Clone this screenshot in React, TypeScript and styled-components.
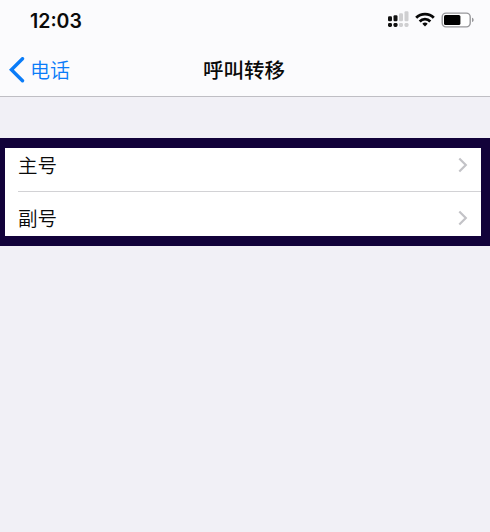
import styled, { createGlobalStyle } from 'styled-components';

const GlobalStyle = createGlobalStyle`
  * {
    box-sizing: border-box;
  }

  body {
    margin: 0;
    background-color: #f1f0f6;
    font-family: Inter, 'Noto Sans CJK SC', sans-serif;
    color: #0a0a0a;
  }
`;

const Screen = styled.div`
  width: 490px;
  height: 532px;
  overflow: hidden;
  background-color: #f1f0f6;
`;

const Header = styled.header`
  height: 97px;
  background-color: #fbfbfd;
  border-bottom: 1px solid #bfbec4;
`;

const StatusBar = styled.div`
  display: flex;
  align-items: center;
  justify-content: space-between;
  height: 40px;
  padding: 0 16px 0 30px;
`;

const Time = styled.span`
  padding-top: 1px;
  font-size: 19.5px;
  font-weight: 600;
  line-height: 40px;
`;

const NavBar = styled.nav`
  display: grid;
  grid-template-columns: 1fr auto 1fr;
  align-items: center;
  height: 56px;
  padding: 3px 11px 0 9px;
`;

const BackButton = styled.button`
  display: flex;
  align-items: center;
  gap: 5px;
  padding: 0;
  border: none;
  background: none;
  color: #0a7cf8;
  font-family: inherit;
  font-size: 20px;
  font-weight: 350;
  line-height: 30px;
`;

const BackLabel = styled.span`
  padding-top: 2px;
`;

const Title = styled.h1`
  margin: 0;
  padding-top: 2px;
  font-size: 20.5px;
  font-weight: 500;
  line-height: 30px;
`;

const Highlight = styled.main`
  height: 108px;
  margin-top: 41px;
  padding: 10px 9px 10px 5px;
  background-color: #12023a;
`;

const List = styled.ul`
  height: 88px;
  margin: 0;
  padding: 0 0 0 13px;
  background-color: #fff;
  list-style: none;
`;

const Row = styled.li<{ $top: number; $divider?: boolean }>`
  display: flex;
  align-items: flex-start;
  justify-content: space-between;
  height: 44px;
  padding: ${props => props.$top}px 13px 0 0;
  border-bottom: ${props => props.$divider ? '1px solid #d2d2d5' : 'none'};
  font-size: 19.5px;
  font-weight: 350;
  line-height: 28px;

  svg {
    margin-top: 5px;
  }
`;

const rows = [
  { label: '主号', top: 4, divider: true },
  { label: '副号', top: 13, divider: false },
];

const signal = [
  { x: 0, top: 5, color: '#111' },
  { x: 5.5, top: 4, color: '#111' },
  { x: 11, top: 2, color: '#cfcfd1' },
  { x: 16.5, top: 0, color: '#cfcfd1' },
];

const StatusIcons = () => (
  <svg width="86" height="18" viewBox="0 0 86 18">
    {signal.map(bar => (
      <g key={bar.x} fill={bar.color}>
        <rect x={bar.x} y={bar.top + 0.3} width="4" height={10 - bar.top} rx="1.2" />
        <rect x={bar.x} y="11.9" width="4" height="4" rx="1.4" />
      </g>
    ))}
    <g fill="none" stroke="#080808" strokeWidth="2.8">
      <path d="M28.2 6.8a12.2 12.2 0 0 1 17.6 0" />
      <path d="M31.7 10.4a7.4 7.4 0 0 1 10.6 0" />
    </g>
    <path d="M34.3 12.7a4 4 0 0 1 5.4 0L37 15.6z" fill="#080808" />
    <rect x="54.2" y="2.1" width="28" height="13.8" rx="3.8" fill="#fff" stroke="#98989b" strokeWidth="1.4" />
    <rect x="56" y="4" width="16.4" height="10" rx="1.6" fill="#000" />
    <path d="M84 6.8c2.2.5 2.2 3.8 0 4.3z" fill="#98989b" />
  </svg>
);

const BackIcon = () => (
  <svg width="16" height="26" viewBox="0 0 16 26">
    <path d="M13.5 1.7 2.4 12.7l11.1 11" fill="none" stroke="#0a7cf8" strokeWidth="3.4" strokeLinecap="round" strokeLinejoin="miter" />
  </svg>
);

const Chevron = () => (
  <svg width="10" height="16" viewBox="0 0 10 16">
    <path d="m1.3 1.5 6.5 6.5-6.5 6.5" fill="none" stroke="#c3c3c7" strokeWidth="2.2" />
  </svg>
);

export default function App() {
  return (
    <>
      <GlobalStyle />
      <Screen>
        <Header>
          <StatusBar>
            <Time>12:03</Time>
            <StatusIcons />
          </StatusBar>
          <NavBar>
            <BackButton>
              <BackIcon />
              <BackLabel>电话</BackLabel>
            </BackButton>
            <Title>呼叫转移</Title>
          </NavBar>
        </Header>
        <Highlight>
          <List>
            {rows.map(row => (
              <Row key={row.label} $top={row.top} $divider={row.divider}>
                <span>{row.label}</span>
                <Chevron />
              </Row>
            ))}
          </List>
        </Highlight>
      </Screen>
    </>
  );
}
